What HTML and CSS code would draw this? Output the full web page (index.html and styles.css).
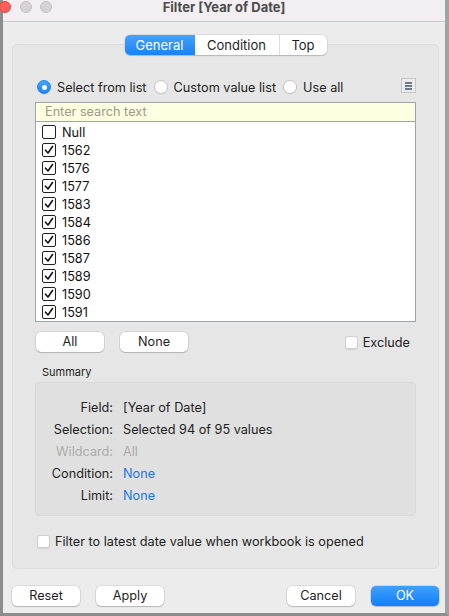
FILE: index.html
```html
<!DOCTYPE html>
<html>
<head>
<meta charset="utf-8">
<title>Filter [Year of Date]</title>
<link rel="stylesheet" href="styles.css">
</head>
<body>
<div class="window">
  <div class="titlebar">
    <div class="lights"><span class="light red"></span><span class="light"></span><span class="light"></span></div>
    <div class="title">Filter [Year of Date]</div>
    <div></div>
  </div>
  <div class="content">
    <div class="tabs">
      <span class="tab tab-general active">General</span>
      <span class="tab tab-condition">Condition</span>
      <span class="tab tab-top">Top</span>
    </div>
    <div class="panel">
      <div class="radios">
        <label class="radio on"><span class="rb"></span>Select from list</label>
        <label class="radio"><span class="rb"></span>Custom value list</label>
        <label class="radio"><span class="rb"></span>Use all</label>
        <span class="menu-btn"><svg width="13" height="13" viewBox="0 0 13 13"><rect x="3" y="3" width="7" height="2" fill="#6b7888"/><rect x="3" y="6" width="7" height="2" fill="#6b7888"/><rect x="3" y="9" width="7" height="2" fill="#6b7888"/></svg></span>
      </div>
      <div class="search">Enter search text</div>
      <div class="list">
        <div class="row"><span class="cb"></span>Null</div>
        <div class="row"><span class="cb checked"><svg width="12" height="12" viewBox="0 0 12 12"><path d="M2.5 6.2 L5 9 L9.5 2.5" fill="none" stroke="#111" stroke-width="1.6" stroke-linecap="round" stroke-linejoin="round"/></svg></span>1562</div>
        <div class="row"><span class="cb checked"><svg width="12" height="12" viewBox="0 0 12 12"><path d="M2.5 6.2 L5 9 L9.5 2.5" fill="none" stroke="#111" stroke-width="1.6" stroke-linecap="round" stroke-linejoin="round"/></svg></span>1576</div>
        <div class="row"><span class="cb checked"><svg width="12" height="12" viewBox="0 0 12 12"><path d="M2.5 6.2 L5 9 L9.5 2.5" fill="none" stroke="#111" stroke-width="1.6" stroke-linecap="round" stroke-linejoin="round"/></svg></span>1577</div>
        <div class="row"><span class="cb checked"><svg width="12" height="12" viewBox="0 0 12 12"><path d="M2.5 6.2 L5 9 L9.5 2.5" fill="none" stroke="#111" stroke-width="1.6" stroke-linecap="round" stroke-linejoin="round"/></svg></span>1583</div>
        <div class="row"><span class="cb checked"><svg width="12" height="12" viewBox="0 0 12 12"><path d="M2.5 6.2 L5 9 L9.5 2.5" fill="none" stroke="#111" stroke-width="1.6" stroke-linecap="round" stroke-linejoin="round"/></svg></span>1584</div>
        <div class="row"><span class="cb checked"><svg width="12" height="12" viewBox="0 0 12 12"><path d="M2.5 6.2 L5 9 L9.5 2.5" fill="none" stroke="#111" stroke-width="1.6" stroke-linecap="round" stroke-linejoin="round"/></svg></span>1586</div>
        <div class="row"><span class="cb checked"><svg width="12" height="12" viewBox="0 0 12 12"><path d="M2.5 6.2 L5 9 L9.5 2.5" fill="none" stroke="#111" stroke-width="1.6" stroke-linecap="round" stroke-linejoin="round"/></svg></span>1587</div>
        <div class="row"><span class="cb checked"><svg width="12" height="12" viewBox="0 0 12 12"><path d="M2.5 6.2 L5 9 L9.5 2.5" fill="none" stroke="#111" stroke-width="1.6" stroke-linecap="round" stroke-linejoin="round"/></svg></span>1589</div>
        <div class="row"><span class="cb checked"><svg width="12" height="12" viewBox="0 0 12 12"><path d="M2.5 6.2 L5 9 L9.5 2.5" fill="none" stroke="#111" stroke-width="1.6" stroke-linecap="round" stroke-linejoin="round"/></svg></span>1590</div>
        <div class="row"><span class="cb checked"><svg width="12" height="12" viewBox="0 0 12 12"><path d="M2.5 6.2 L5 9 L9.5 2.5" fill="none" stroke="#111" stroke-width="1.6" stroke-linecap="round" stroke-linejoin="round"/></svg></span>1591</div>
      </div>
      <div class="btnrow">
        <span class="btn">All</span>
        <span class="btn">None</span>
        <label class="exclude"><span class="box"></span>Exclude</label>
      </div>
      <div class="summary-label">Summary</div>
      <div class="summary">
        <span class="k">Field:</span><span class="v">[Year of Date]</span>
        <span class="k">Selection:</span><span class="v">Selected 94 of 95 values</span>
        <span class="k dim">Wildcard:</span><span class="v dim">All</span>
        <span class="k">Condition:</span><span class="v link">None</span>
        <span class="k">Limit:</span><span class="v link">None</span>
      </div>
      <label class="latest"><span class="box"></span>Filter to latest date value when workbook is opened</label>
    </div>
    <div class="footer">
      <span class="btn">Reset</span>
      <span class="btn">Apply</span>
      <span class="btn push">Cancel</span>
      <span class="btn primary">OK</span>
    </div>
  </div>
</div>
</body>
</html>
```

FILE: styles.css
```css
* { box-sizing: border-box; }
html, body { margin: 0; padding: 0; }
body {
  width: 449px;
  height: 616px;
  overflow: hidden;
  font-family: Inter, "Liberation Sans", sans-serif;
  font-size: 12.7px;
  color: #222;
  background: #ececec;
}
.window {
  width: 449px;
  height: 616px;
  background: #ececec;
  border-left: 3px solid #8d8d8d;
  border-right: 4px solid #a2a2a2;
  border-bottom: 3px solid #8d8d8d;
  display: flex;
  flex-direction: column;
}
.titlebar {
  height: 22px;
  flex: none;
  background: #f2eef2;
  border-bottom: 1px solid #cbc7cb;
  display: grid;
  grid-template-columns: 1fr auto 1fr;
  align-items: start;
}
.lights {
  display: flex;
  gap: 8px;
  margin-left: -4px;
  padding-top: 1px;
}
.light {
  width: 12px;
  height: 12px;
  border-radius: 50%;
  background: #d6d2d6;
  border: 1px solid #c4c0c4;
}
.light.red {
  background: #fc5f57;
  border-color: #e0443e;
  margin-right: 1px;
}
.title {
  font-weight: 700;
  color: #4b4b4b;
  line-height: 14px;
  font-size: 13px;
}
.content {
  flex: 1;
  display: flex;
  flex-direction: column;
  align-items: stretch;
  padding: 13px 6px 0 9px;
}
.tabs {
  align-self: center;
  display: flex;
  height: 20px;
  border-radius: 5px;
  background: #fff;
  box-shadow: 0 0 0 0.5px rgba(0,0,0,0.14), 0 1px 1px rgba(0,0,0,0.14);
  position: relative;
  z-index: 1;
  overflow: hidden;
}
.tab {
  line-height: 20px;
  text-align: center;
  font-size: 13px;
  color: #1e1e1e;
}
.tab-general { width: 70px; }
.tab-condition { width: 85px; border-right: 1px solid #dcdcdc; }
.tab-top { width: 47px; }
.tab.active {
  color: #fff;
  background: linear-gradient(#45a3fd, #1a82f8);
}
.panel {
  margin-top: -11px;
  height: 525px;
  flex: none;
  background: #e6e6e6;
  border: 1px solid #dddddd;
  border-radius: 5px;
  padding: 33px 22px 0 22px;
  display: flex;
  flex-direction: column;
}
.radios {
  height: 18px;
  display: flex;
  align-items: center;
  padding-left: 2px;
}
.radio {
  display: flex;
  align-items: center;
  gap: 6px;
  margin-right: 7px;
}
.rb {
  width: 14px;
  height: 14px;
  border-radius: 50%;
  background: #fff;
  border: 1px solid #c5c5c5;
  box-shadow: 0 0.5px 1px rgba(0,0,0,0.08);
  display: flex;
  align-items: center;
  justify-content: center;
}
.radio.on .rb {
  background: linear-gradient(#47a5fd, #1a82f8);
  border-color: #1e84f5;
}
.radio.on .rb::after {
  content: "";
  width: 5px;
  height: 5px;
  border-radius: 50%;
  background: #fff;
}
.menu-btn {
  margin-left: auto;
  align-self: flex-start;
  width: 15px;
  height: 15px;
  border: 1px solid #c6c6c6;
  background: #ebebeb;
  display: flex;
  align-items: center;
  justify-content: center;
}
.search {
  margin-top: 6px;
  height: 20px;
  background: #fefee0;
  border: 1px solid #9ea4aa;
  padding-left: 9px;
  line-height: 18px;
  color: #9b9b8c;
}
.list {
  height: 200px;
  background: #fff;
  border: 1px solid #9ea4aa;
  border-top: none;
  padding-top: 1px;
  overflow: hidden;
}
.row {
  height: 18px;
  display: flex;
  align-items: center;
  padding-left: 6px;
  gap: 6px;
  color: #111;
}
.cb {
  width: 14px;
  height: 14px;
  border: 1px solid #222;
  border-radius: 2px;
  background: #fff;
  display: flex;
  align-items: center;
  justify-content: center;
}
.btnrow {
  margin-top: 10px;
  height: 20px;
  display: flex;
  align-items: center;
  gap: 16px;
  padding-left: 1px;
}
.btn {
  width: 68px;
  height: 20px;
  line-height: 20px;
  text-align: center;
  background: #fff;
  border-radius: 5px;
  box-shadow: 0 0 0 0.5px rgba(0,0,0,0.16), 0 1px 1px rgba(0,0,0,0.16);
  color: #1e1e1e;
  flex: none;
}
.exclude {
  margin-left: auto;
  margin-right: 6px;
  display: flex;
  align-items: center;
  gap: 5px;
  color: #222;
}
.box {
  width: 13px;
  height: 13px;
  border-radius: 3px;
  background: #fff;
  border: 1px solid #cfcfcf;
  box-shadow: 0 0.5px 1px rgba(0,0,0,0.08);
}
.summary-label {
  margin-top: 13px;
  font-size: 11px;
  line-height: 14px;
  padding-left: 7px;
  color: #222;
}
.summary {
  margin-top: 3px;
  height: 134px;
  background: #e0e0e0;
  border: 1px solid #d9d9d9;
  border-radius: 4px;
  padding-top: 13px;
  display: grid;
  grid-template-columns: 77px 1fr;
  grid-auto-rows: 22px;
  column-gap: 10px;
  align-items: center;
  align-content: start;
}
.k { text-align: right; color: #1e1e1e; }
.v { color: #1e1e1e; }
.dim { color: #ababab; }
.link { color: #1b74e4; }
.latest {
  margin-top: 18px;
  height: 14px;
  display: flex;
  align-items: center;
  gap: 5px;
  padding-left: 2px;
  color: #222;
}
.footer {
  margin-top: 17px;
  display: flex;
  gap: 16px;
}
.push { margin-left: auto; }
.btn.primary {
  color: #fff;
  background: linear-gradient(#3fa0fd, #137ff7);
  box-shadow: 0 0 0 0.5px rgba(0,90,200,0.3), 0 1px 1px rgba(0,0,0,0.12);
}
```
